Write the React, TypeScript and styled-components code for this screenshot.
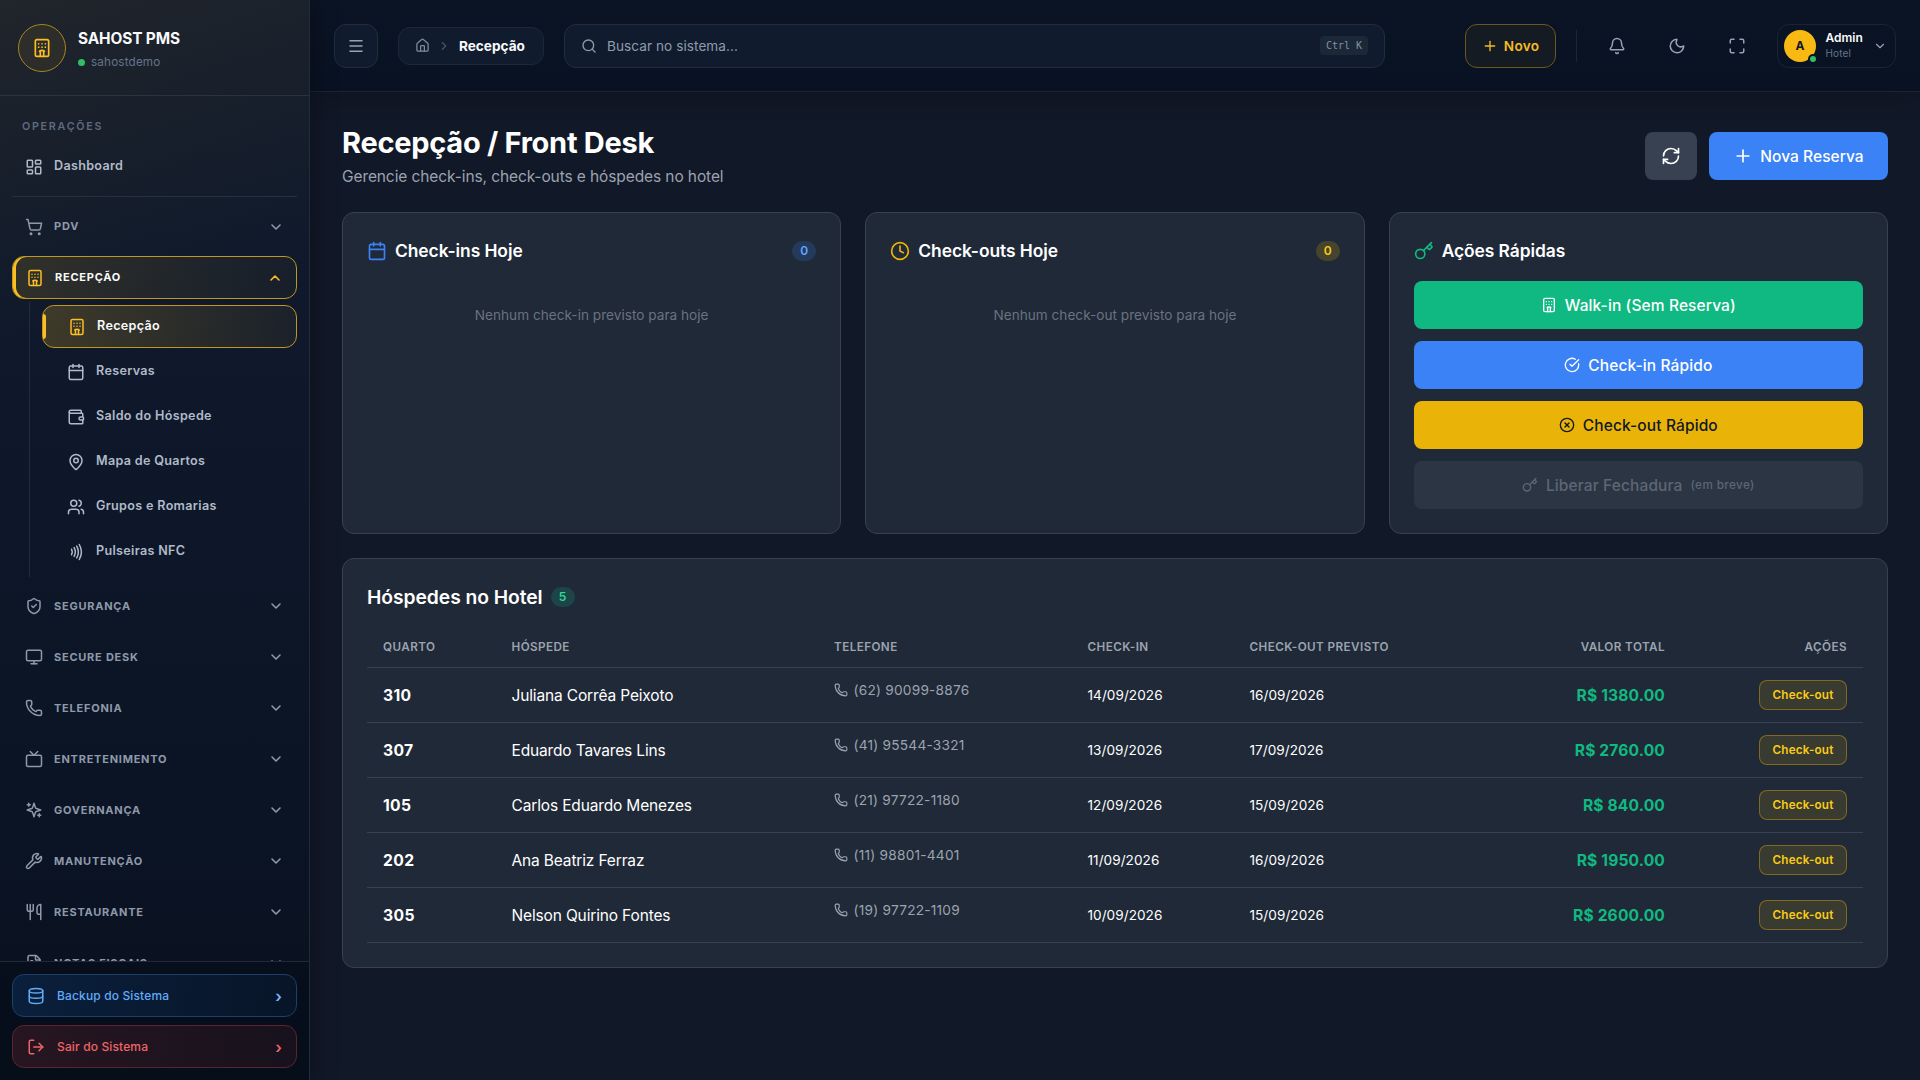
import React from "react";
import styled, { createGlobalStyle, css } from "styled-components";
import {
  Bell,
  Calendar,
  ChevronDown,
  ChevronRight,
  ChevronUp,
  CircleCheckBig,
  CircleX,
  Clock,
  Database,
  FileText,
  Hotel,
  House,
  Key,
  LayoutDashboard,
  LogOut,
  MapPin,
  Maximize,
  Menu,
  Monitor,
  Moon,
  Nfc,
  Phone,
  Plus,
  RefreshCw,
  Search,
  ShieldCheck,
  ShoppingCart,
  Tv,
  Users,
  Utensils,
  Wallet,
  Wrench,
} from "lucide-react";

const GlobalStyle = createGlobalStyle`
  *, *::before, *::after { box-sizing: border-box; }
  body {
    margin: 0;
    background: #111827;
    color: #fff;
    font-family: Inter, "Liberation Sans", sans-serif;
    font-size: 15.5px;
    line-height: 24px;
  }
  button { font: inherit; color: inherit; letter-spacing: inherit; margin: 0; cursor: pointer; }
  h1, h2, p { margin: 0; }
  svg { display: block; flex: none; }
`;

/* ---------- shell ---------- */

const Shell = styled.div`
  display: grid;
  grid-template-columns: 310px 1fr;
  height: 1080px;
  overflow: hidden;
`;

const Sidebar = styled.aside`
  display: flex;
  flex-direction: column;
  min-height: 0;
  border-right: 1px solid #232c3b;
  background:
    linear-gradient(160deg, rgba(251, 191, 36, 0.062), rgba(251, 191, 36, 0) 330px),
    linear-gradient(180deg, #121b2c 0%, #0f192b 30%, #0c1526 65%, #091120 100%);
  box-shadow: 4px 0 24px rgba(0, 0, 0, 0.28);
  z-index: 2;
`;

const Brand = styled.div`
  display: flex;
  align-items: flex-start;
  gap: 12px;
  height: 96px;
  flex: none;
  padding: 24px 18px 0;
  border-bottom: 1px solid #2a333f;
`;

const BrandMark = styled.div`
  display: grid;
  place-items: center;
  width: 48px;
  height: 48px;
  border: 1px solid #a8841f;
  border-radius: 50%;
  background: rgba(251, 191, 36, 0.07);
  color: #fbbf24;
`;

const BrandText = styled.div`
  display: flex;
  flex-direction: column;
  gap: 4px;
  padding-top: 5px;
`;

const BrandName = styled.div`
  font-size: 15.4px;
  font-weight: 700;
  line-height: 20px;
  letter-spacing: -0.12px;
  color: #f8fafc;
`;

const BrandTenant = styled.div`
  display: flex;
  align-items: center;
  gap: 6px;
  font-size: 11.7px;
  line-height: 18px;
  letter-spacing: 0.17px;
  color: #64748b;
`;

const OnlineDot = styled.span`
  width: 7px;
  height: 7px;
  border-radius: 50%;
  background: #2fbf64;
`;

const Nav = styled.nav`
  flex: 1;
  min-height: 0;
  overflow: hidden;
  padding: 20px 12px 0;
`;

const SectionLabel = styled.div`
  padding: 1px 0 0 10px;
  font-size: 10.7px;
  font-weight: 600;
  line-height: 19px;
  letter-spacing: 1.75px;
  color: #5f6b7e;
`;

const Label = styled.span`
  flex: 1;
`;

const DashboardItem = styled.a`
  display: flex;
  align-items: center;
  gap: 11.5px;
  height: 43px;
  margin-top: 9px;
  padding: 0 12.5px;
  font-size: 12.6px;
  font-weight: 600;
  letter-spacing: 0.3px;
  color: #b0bac8;

  ${Label} {
    padding-bottom: 2px;
  }
`;

const Divider = styled.div`
  height: 1px;
  margin: 8px 0;
  background: #27303e;
`;

const GroupButton = styled.div<{ $active?: boolean; $raised?: boolean }>`
  display: flex;
  align-items: center;
  gap: 11.5px;
  height: 43px;
  margin-bottom: 8px;
  padding: 0 13px 0 12.5px;
  border-radius: 12px;
  font-size: 11px;
  font-weight: 650;
  letter-spacing: 0.76px;
  color: #8e99aa;

  ${Label} {
    padding-bottom: ${(p) => (p.$raised ? 2 : 0)}px;
  }

  ${(p) =>
    p.$active &&
    css`
      margin-bottom: 2px;
      border: 1px solid #c2961f;
      background: linear-gradient(90deg, rgba(251, 191, 36, 0.13), rgba(251, 191, 36, 0.03));
      box-shadow: inset 3px 0 0 #fbbf24;
      color: #f8fafc;
      svg {
        color: #fbbf24;
      }
    `}
`;

const SubList = styled.div`
  display: flex;
  flex-direction: column;
  gap: 2px;
  margin: 0 0 7px 17px;
  padding: 4px 0 4px 12px;
  border-left: 1px solid #222c3b;
`;

const SubItem = styled.div<{ $active?: boolean }>`
  display: flex;
  align-items: center;
  gap: 11.5px;
  height: 43px;
  padding: 0 24.5px;
  border-radius: 12px;
  font-size: 12.6px;
  font-weight: 600;
  letter-spacing: 0.32px;
  color: #b0bac8;

  ${Label} {
    padding-bottom: 2px;
  }

  ${(p) =>
    p.$active &&
    css`
      position: relative;
      border: 1px solid #c2961f;
      background: linear-gradient(90deg, rgba(251, 191, 36, 0.2), rgba(251, 191, 36, 0.05));
      color: #f8fafc;
      svg {
        color: #fbbf24;
      }
      &::before {
        content: "";
        position: absolute;
        left: 0;
        top: 8px;
        width: 3px;
        height: 25px;
        border-radius: 0 3px 3px 0;
        background: #fbbf24;
      }
    `}
`;

const SidebarFooter = styled.div`
  display: flex;
  flex-direction: column;
  gap: 8px;
  flex: none;
  padding: 12px;
  border-top: 1px solid #1f2938;
  background: rgba(4, 9, 18, 0.35);
`;

const FooterButton = styled.div<{ $tone: "blue" | "red" }>`
  display: flex;
  align-items: center;
  gap: 12px;
  height: 43px;
  padding: 0 14px;
  border: 1px solid ${(p) => (p.$tone === "blue" ? "#1e3f66" : "#5c2431")};
  border-radius: 12px;
  background: ${(p) =>
    p.$tone === "blue"
      ? "linear-gradient(90deg, rgba(30, 130, 246, 0.15), rgba(30, 130, 246, 0.06))"
      : "linear-gradient(90deg, rgba(239, 68, 68, 0.14), rgba(239, 68, 68, 0.07))"};
  font-size: 12px;
  font-weight: 550;
  letter-spacing: 0.14px;
  color: ${(p) => (p.$tone === "blue" ? "#62abf8" : "#ee6468")};
`;

const Caret = styled.span`
  font-size: 16px;
  font-weight: 600;
  color: ${(p) => p.color};
`;

/* ---------- top bar ---------- */

const Main = styled.div`
  display: flex;
  flex-direction: column;
  min-width: 0;
`;

const TopBar = styled.header`
  display: flex;
  align-items: center;
  height: 92px;
  flex: none;
  padding: 0 24px;
  border-bottom: 1px solid #1c2434;
  background: linear-gradient(180deg, #0b1425, #091223);
  box-shadow: 0 4px 24px rgba(0, 0, 0, 0.2);
`;

const MenuButton = styled.button`
  display: grid;
  place-items: center;
  width: 44px;
  height: 44px;
  padding: 0;
  border: 1px solid #212d3d;
  border-radius: 12px;
  background: #101c2e;
  color: #94a3b8;
`;

const Breadcrumb = styled.div`
  display: flex;
  align-items: center;
  width: 146px;
  height: 38px;
  margin-left: 20px;
  padding: 0 0 0 16px;
  border: 1px solid #1c2737;
  border-radius: 12px;
  background: #101c2e;
  font-size: 13.6px;
  font-weight: 700;
  color: #f8fafc;
`;

const CrumbIcon = styled.span<{ $dim?: boolean }>`
  margin-right: ${(p) => (p.$dim ? 8 : 7)}px;
  color: ${(p) => (p.$dim ? "#475569" : "#7d8b9e")};
`;

const SearchBox = styled.div`
  display: flex;
  align-items: center;
  gap: 10px;
  width: 821px;
  height: 44px;
  margin-left: 20px;
  padding: 0 16px;
  border: 1px solid #212d3d;
  border-radius: 12px;
  background: #101c2e;
  font-size: 13.6px;
  letter-spacing: 0.06px;
  color: #8f9bad;
`;

const Kbd = styled.kbd`
  height: 19px;
  padding: 0 6px;
  border-radius: 4px;
  background: #1c2838;
  font-family: "DejaVu Sans Mono", "Liberation Mono", monospace;
  font-size: 10px;
  line-height: 19px;
  letter-spacing: 0;
  color: #8290a3;
`;

const TopActions = styled.div`
  display: flex;
  align-items: center;
  margin-left: auto;
`;

const NewButton = styled.button`
  display: flex;
  align-items: center;
  justify-content: center;
  gap: 6px;
  width: 91px;
  height: 44px;
  padding: 0;
  border: 1px solid #6d5620;
  border-radius: 12px;
  background: #151b22;
  font-size: 13.6px;
  font-weight: 600;
  letter-spacing: 0.25px;
  color: #f6bb27;
`;

const TopDivider = styled.div`
  width: 1px;
  height: 32px;
  margin: 0 18px 0 20px;
  background: #1c2535;
`;

const IconButton = styled.button`
  display: grid;
  place-items: center;
  width: 44px;
  height: 44px;
  margin-right: 16px;
  padding: 0;
  border: 0;
  background: none;
  color: #94a3b8;
`;

const UserMenu = styled.div`
  display: flex;
  align-items: center;
  width: 119px;
  height: 44px;
  margin-left: 2px;
  padding-left: 6px;
  border: 1px solid #1a2434;
  border-radius: 12px;
  color: #94a3b8;
`;

const Avatar = styled.div`
  position: relative;
  display: grid;
  place-items: center;
  width: 32px;
  height: 32px;
  border-radius: 50%;
  background: #f8b913;
  font-size: 12px;
  font-weight: 700;
  color: #111827;

  &::after {
    content: "";
    position: absolute;
    right: -2px;
    bottom: -2px;
    width: 10px;
    height: 10px;
    border: 2px solid #0a1324;
    border-radius: 50%;
    background: #2fbf64;
  }
`;

const UserText = styled.div`
  display: flex;
  flex-direction: column;
  width: 47.5px;
  margin-left: 9.5px;
`;

const UserName = styled.span`
  font-size: 12px;
  font-weight: 600;
  line-height: 15px;
  color: #f8fafc;
`;

const UserRole = styled.span`
  font-size: 10px;
  line-height: 16px;
  letter-spacing: 0.15px;
  color: #64748b;
`;

/* ---------- page ---------- */

const Page = styled.main`
  display: flex;
  flex-direction: column;
  gap: 24px;
  padding: 32px;
`;

const PageHead = styled.div`
  display: flex;
  align-items: center;
  justify-content: space-between;
`;

const Title = styled.h1`
  padding-top: 1px;
  font-size: 29px;
  font-weight: 700;
  line-height: 35px;
  letter-spacing: -0.27px;
`;

const Subtitle = styled.p`
  margin-top: 5px;
  line-height: 23px;
  letter-spacing: -0.1px;
  color: #9ca3af;
`;

const HeadActions = styled.div`
  display: flex;
  gap: 12px;
`;

const HeadButton = styled.button<{ $primary?: boolean }>`
  display: flex;
  align-items: center;
  justify-content: center;
  gap: 7px;
  height: 48px;
  width: ${(p) => (p.$primary ? 179 : 52)}px;
  padding: 0;
  border: 0;
  border-radius: 8px;
  background: ${(p) => (p.$primary ? "#3b82f6" : "#374151")};
  font-weight: 550;
  letter-spacing: 0.05px;
  color: #fff;

  span {
    padding-top: 1px;
  }
`;

const CardRow = styled.div`
  display: grid;
  grid-template-columns: repeat(3, 1fr);
  gap: 24px;
`;

const Card = styled.section`
  padding: 24px;
  border: 1px solid #374151;
  border-radius: 12px;
  background: #1f2937;
`;

const CardHead = styled.div`
  display: flex;
  align-items: center;
  gap: 8px;
  margin-bottom: 16px;
  color: ${(p) => p.color};
`;

const CardTitle = styled.h2<{ $large?: boolean }>`
  font-size: ${(p) => (p.$large ? 19.3 : 17.4)}px;
  font-weight: 600;
  line-height: 28px;
  letter-spacing: -0.06px;
  color: #fff;
`;

const tones = {
  blue: ["rgba(59, 130, 246, 0.2)", "#60a5fa"],
  yellow: ["rgba(234, 179, 8, 0.2)", "#facc15"],
  green: ["rgba(16, 185, 129, 0.2)", "#34d399"],
};

const Count = styled.span<{ $tone: keyof typeof tones; $push?: boolean }>`
  min-width: 24px;
  margin-left: ${(p) => (p.$push ? "auto" : 0)};
  padding: 2px 0;
  border-radius: 999px;
  background: ${(p) => tones[p.$tone][0]};
  font-size: 12px;
  font-weight: 600;
  line-height: 16px;
  text-align: center;
  color: ${(p) => tones[p.$tone][1]};
`;

const Empty = styled.p`
  padding: 24px 0;
  font-size: 13.6px;
  line-height: 20px;
  letter-spacing: 0.02px;
  text-align: center;
  color: #6b7280;
`;

const ActionList = styled.div`
  display: flex;
  flex-direction: column;
  gap: 12px;
`;

const ActionButton = styled.button<{ $bg: string; $fg?: string; $off?: boolean }>`
  display: flex;
  align-items: center;
  justify-content: center;
  gap: 8px;
  height: 48px;
  padding: 0;
  border: 0;
  border-radius: 8px;
  background: ${(p) => p.$bg};
  font-weight: 550;
  letter-spacing: 0.12px;
  color: ${(p) => p.$fg ?? "#fff"};
  opacity: ${(p) => (p.$off ? 0.5 : 1)};
`;

const ActionLabel = styled.span`
  padding-top: 1px;
`;

const Soon = styled.span`
  font-size: 11.7px;
  letter-spacing: 0.4px;
`;

/* ---------- table ---------- */

const Table = styled.table`
  width: 100%;
  table-layout: fixed;
  border-collapse: separate;
  border-spacing: 0;
`;

const Th = styled.th<{ $right?: boolean; $w?: number }>`
  width: ${(p) => (p.$w ? `${p.$w}px` : "auto")};
  height: 41px;
  padding: 0 16px;
  border-bottom: 1px solid #374151;
  font-size: 11.7px;
  font-weight: 600;
  line-height: 16px;
  letter-spacing: 0.42px;
  text-align: ${(p) => (p.$right ? "right" : "left")};
  text-transform: uppercase;
  color: #9ca3af;
`;

const cellKinds = {
  room: css`
    padding-top: 1px;
    font-size: 15.7px;
    font-weight: 700;
    letter-spacing: 0.35px;
  `,
  name: css`
    padding-top: 1px;
    letter-spacing: -0.15px;
  `,
  date: css`
    font-size: 13.6px;
    letter-spacing: 0.04px;
  `,
  value: css`
    padding-top: 1px;
    font-size: 15.6px;
    font-weight: 700;
    letter-spacing: 0.15px;
    color: #10b981;
  `,
  phone: css`
    padding-top: 12px;
    vertical-align: top;
  `,
  action: css``,
};

const Td = styled.td<{ $right?: boolean; $kind: keyof typeof cellKinds }>`
  height: 55px;
  padding: 0 16px;
  border-bottom: 1px solid #374151;
  text-align: ${(p) => (p.$right ? "right" : "left")};
  ${(p) => cellKinds[p.$kind]}
`;

const PhoneLine = styled.div`
  display: flex;
  align-items: center;
  gap: 5.5px;
  font-size: 13.7px;
  line-height: 20px;
  letter-spacing: 0.22px;
  color: #9ca3af;
`;

const CheckoutButton = styled.button`
  width: 88px;
  height: 30px;
  padding: 0;
  border: 1px solid rgba(234, 179, 8, 0.4);
  border-radius: 8px;
  background: rgba(234, 179, 8, 0.13);
  font-size: 11.7px;
  font-weight: 600;
  line-height: 16px;
  letter-spacing: 0.17px;
  color: #facc15;
`;

const Sparkles = ({ size = 24 }: { size?: number }) => (
  <svg
    width={size}
    height={size}
    viewBox="0 0 24 24"
    fill="none"
    stroke="currentColor"
    strokeWidth="2"
    strokeLinecap="round"
    strokeLinejoin="round"
  >
    <path d="m12 3-1.912 5.813a2 2 0 0 1-1.275 1.275L3 12l5.813 1.912a2 2 0 0 1 1.275 1.275L12 21l1.912-5.813a2 2 0 0 1 1.275-1.275L21 12l-5.813-1.912a2 2 0 0 1-1.275-1.275L12 3Z" />
    <path d="M5 3v4M19 17v4M3 5h4M17 19h4" />
  </svg>
);

const subItems = [
  { icon: Hotel, label: "Recepção", active: true },
  { icon: Calendar, label: "Reservas" },
  { icon: Wallet, label: "Saldo do Hóspede" },
  { icon: MapPin, label: "Mapa de Quartos" },
  { icon: Users, label: "Grupos e Romarias" },
  { icon: Nfc, label: "Pulseiras NFC" },
];

const groups = [
  { icon: ShieldCheck, label: "SEGURANÇA" },
  { icon: Monitor, label: "SECURE DESK" },
  { icon: Phone, label: "TELEFONIA" },
  { icon: Tv, label: "ENTRETENIMENTO" },
  { icon: Sparkles, label: "GOVERNANÇA" },
  { icon: Wrench, label: "MANUTENÇÃO" },
  { icon: Utensils, label: "RESTAURANTE" },
  { icon: FileText, label: "NOTAS FISCAIS" },
];

const guests = [
  ["310", "Juliana Corrêa Peixoto", "(62) 90099-8876", "14/09/2026", "16/09/2026", "R$ 1380.00"],
  ["307", "Eduardo Tavares Lins", "(41) 95544-3321", "13/09/2026", "17/09/2026", "R$ 2760.00"],
  ["105", "Carlos Eduardo Menezes", "(21) 97722-1180", "12/09/2026", "15/09/2026", "R$ 840.00"],
  ["202", "Ana Beatriz Ferraz", "(11) 98801-4401", "11/09/2026", "16/09/2026", "R$ 1950.00"],
  ["305", "Nelson Quirino Fontes", "(19) 97722-1109", "10/09/2026", "15/09/2026", "R$ 2600.00"],
];

export default function App() {
  return (
    <>
      <GlobalStyle />
      <Shell>
        <Sidebar>
          <Brand>
            <BrandMark>
              <Hotel size={20} />
            </BrandMark>
            <BrandText>
              <BrandName>SAHOST PMS</BrandName>
              <BrandTenant>
                <OnlineDot />
                <span>sahostdemo</span>
              </BrandTenant>
            </BrandText>
          </Brand>
          <Nav>
            <SectionLabel>OPERAÇÕES</SectionLabel>
            <DashboardItem>
              <LayoutDashboard size={18} />
              <Label>Dashboard</Label>
            </DashboardItem>
            <Divider />
            <GroupButton $raised>
              <ShoppingCart size={18} />
              <Label>PDV</Label>
              <ChevronDown size={16} strokeWidth={2.4} />
            </GroupButton>
            <GroupButton $active $raised>
              <Hotel size={18} />
              <Label>RECEPÇÃO</Label>
              <ChevronUp size={16} strokeWidth={2.4} />
            </GroupButton>
            <SubList>
              {subItems.map(({ icon: Icon, label, active }) => (
                <SubItem key={label} $active={active}>
                  <Icon size={18} />
                  <Label>{label}</Label>
                </SubItem>
              ))}
            </SubList>
            {groups.map(({ icon: Icon, label }) => (
              <GroupButton key={label}>
                <Icon size={18} />
                <Label>{label}</Label>
                <ChevronDown size={16} strokeWidth={2.4} />
              </GroupButton>
            ))}
          </Nav>
          <SidebarFooter>
            <FooterButton $tone="blue">
              <Database size={18} />
              <Label>Backup do Sistema</Label>
              <Caret color="#7ab8fb">›</Caret>
            </FooterButton>
            <FooterButton $tone="red">
              <LogOut size={18} />
              <Label>Sair do Sistema</Label>
              <Caret color="#ee6468">›</Caret>
            </FooterButton>
          </SidebarFooter>
        </Sidebar>

        <Main>
          <TopBar>
            <MenuButton>
              <Menu size={18} />
            </MenuButton>
            <Breadcrumb>
              <CrumbIcon>
                <House size={15} />
              </CrumbIcon>
              <CrumbIcon $dim>
                <ChevronRight size={14} />
              </CrumbIcon>
              <span>Recepção</span>
            </Breadcrumb>
            <SearchBox>
              <Search size={16} />
              <Label>Buscar no sistema...</Label>
              <Kbd>Ctrl K</Kbd>
            </SearchBox>
            <TopActions>
              <NewButton>
                <Plus size={16} />
                <span>Novo</span>
              </NewButton>
              <TopDivider />
              <IconButton>
                <Bell size={18} />
              </IconButton>
              <IconButton>
                <Moon size={18} />
              </IconButton>
              <IconButton>
                <Maximize size={18} />
              </IconButton>
              <UserMenu>
                <Avatar>A</Avatar>
                <UserText>
                  <UserName>Admin</UserName>
                  <UserRole>Hotel</UserRole>
                </UserText>
                <ChevronDown size={14} />
              </UserMenu>
            </TopActions>
          </TopBar>

          <Page>
            <PageHead>
              <div>
                <Title>Recepção / Front Desk</Title>
                <Subtitle>Gerencie check-ins, check-outs e hóspedes no hotel</Subtitle>
              </div>
              <HeadActions>
                <HeadButton>
                  <RefreshCw size={20} />
                </HeadButton>
                <HeadButton $primary>
                  <Plus size={20} />
                  <span>Nova Reserva</span>
                </HeadButton>
              </HeadActions>
            </PageHead>

            <CardRow>
              <Card>
                <CardHead color="#3b82f6">
                  <Calendar size={20} />
                  <CardTitle>Check-ins Hoje</CardTitle>
                  <Count $tone="blue" $push>
                    0
                  </Count>
                </CardHead>
                <Empty>Nenhum check-in previsto para hoje</Empty>
              </Card>
              <Card>
                <CardHead color="#eab308">
                  <Clock size={20} />
                  <CardTitle>Check-outs Hoje</CardTitle>
                  <Count $tone="yellow" $push>
                    0
                  </Count>
                </CardHead>
                <Empty>Nenhum check-out previsto para hoje</Empty>
              </Card>
              <Card>
                <CardHead color="#10b981">
                  <Key size={20} />
                  <CardTitle>Ações Rápidas</CardTitle>
                </CardHead>
                <ActionList>
                  <ActionButton $bg="#10b981">
                    <Hotel size={16} />
                    <ActionLabel>Walk-in (Sem Reserva)</ActionLabel>
                  </ActionButton>
                  <ActionButton $bg="#3b82f6">
                    <CircleCheckBig size={16} />
                    <ActionLabel>Check-in Rápido</ActionLabel>
                  </ActionButton>
                  <ActionButton $bg="#eab308" $fg="#111827">
                    <CircleX size={16} />
                    <ActionLabel>Check-out Rápido</ActionLabel>
                  </ActionButton>
                  <ActionButton $bg="#374151" $fg="#9ca3af" $off>
                    <Key size={16} />
                    <ActionLabel>Liberar Fechadura</ActionLabel>
                    <Soon>(em breve)</Soon>
                  </ActionButton>
                </ActionList>
              </Card>
            </CardRow>

            <Card>
              <CardHead>
                <CardTitle $large>Hóspedes no Hotel</CardTitle>
                <Count $tone="green">5</Count>
              </CardHead>
              <Table>
                <thead>
                  <tr>
                    <Th $w={128.5}>Quarto</Th>
                    <Th $w={322.5}>Hóspede</Th>
                    <Th $w={253.5}>Telefone</Th>
                    <Th $w={162}>Check-in</Th>
                    <Th>Check-out Previsto</Th>
                    <Th $w={180} $right>
                      Valor Total
                    </Th>
                    <Th $w={182} $right>
                      Ações
                    </Th>
                  </tr>
                </thead>
                <tbody>
                  {guests.map(([room, name, phone, checkIn, checkOut, total]) => (
                    <tr key={room}>
                      <Td $kind="room">{room}</Td>
                      <Td $kind="name">{name}</Td>
                      <Td $kind="phone">
                        <PhoneLine>
                          <Phone size={14} />
                          <span>{phone}</span>
                        </PhoneLine>
                      </Td>
                      <Td $kind="date">{checkIn}</Td>
                      <Td $kind="date">{checkOut}</Td>
                      <Td $kind="value" $right>
                        {total}
                      </Td>
                      <Td $kind="action" $right>
                        <CheckoutButton>Check-out</CheckoutButton>
                      </Td>
                    </tr>
                  ))}
                </tbody>
              </Table>
            </Card>
          </Page>
        </Main>
      </Shell>
    </>
  );
}
